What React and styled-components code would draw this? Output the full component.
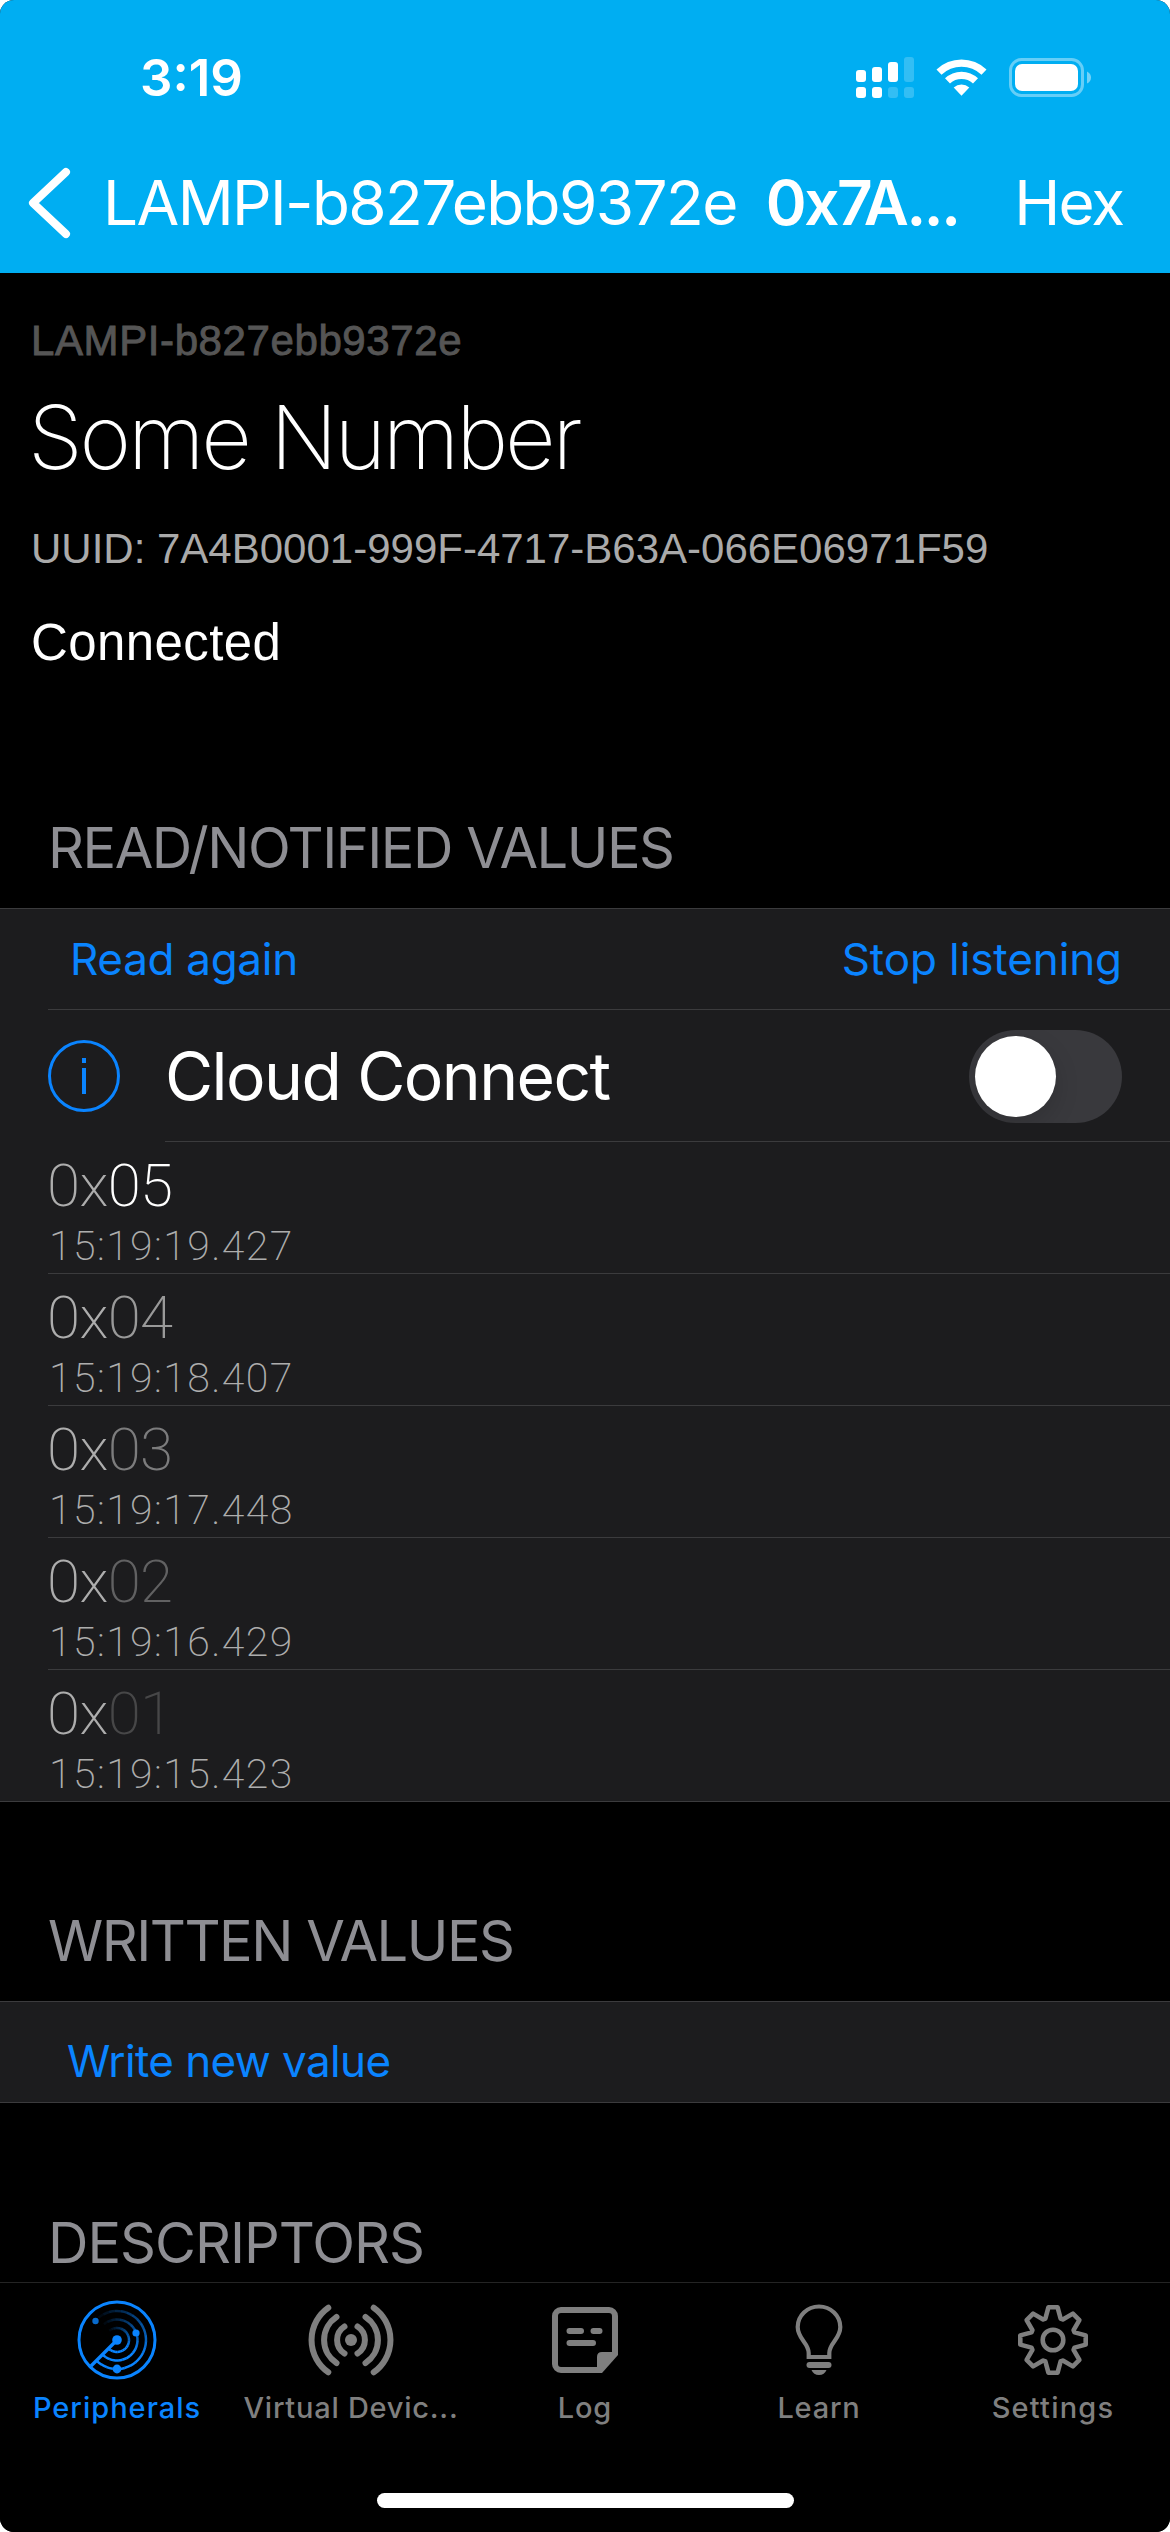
import React from 'react';
import styled, { createGlobalStyle } from 'styled-components';

const sans = `Inter, "Liberation Sans", sans-serif`;
const helv = `"Liberation Sans", Arial, sans-serif`;
const thin = `Roboto, Inter, sans-serif`;

const Global = createGlobalStyle`
  * { box-sizing: border-box; }
  html, body { margin: 0; padding: 0; background: #fff; }
`;

const Screen = styled.div`
  width: 1170px;
  height: 2532px;
  display: flex;
  flex-direction: column;
  background: #000;
  border-radius: 14px;
  overflow: hidden;
  font-family: ${sans};
  color: #fff;
`;

const Top = styled.header`
  height: 273px;
  flex: none;
  background: #00aef2;
  display: flex;
  flex-direction: column;
`;

const StatusBar = styled.div`
  height: 141px;
  padding: 17px 78px 0 140px;
  display: flex;
  align-items: flex-start;
  justify-content: space-between;
`;

const Label = styled.span`
  display: block;
  flex: none;
  white-space: nowrap;
  font-family: ${(p) => p.$font || sans};
  font-size: ${(p) => p.$size}px;
  line-height: ${(p) => p.$line || p.$size}px;
  font-weight: ${(p) => p.$weight || 400};
  letter-spacing: ${(p) => p.$track || 0}px;
  color: ${(p) => p.$color || '#fff'};
`;

const DeviceName = styled(Label)`
  -webkit-text-stroke: 0.9px #555;
`;

const StatusIcons = styled.svg`
  display: block;
  width: 236px;
  height: 50px;
  margin-top: 35px;
`;

const NavBar = styled.nav`
  display: flex;
  align-items: center;
  height: 123px;
  padding: 0 47px 0 25px;
`;

const Chevron = styled.svg`
  display: block;
  width: 50px;
  height: 80px;
  margin-right: 28px;
`;

const Spacer = styled.div`
  width: ${(p) => p.$w || 0}px;
  flex: ${(p) => (p.$w ? 'none' : 1)};
`;

const Summary = styled.section`
  height: 436px;
  flex: none;
  padding: 46px 31px 0;
`;

const SummaryLine = styled.div`
  height: ${(p) => p.$h}px;
  margin-left: ${(p) => p.$shift || 0}px;
`;

const SectionTitle = styled.h2`
  margin: 0;
  height: ${(p) => p.$h}px;
  flex: none;
  padding: 0 48px ${(p) => p.$pb}px;
  display: flex;
  align-items: flex-end;
  font-size: 56px;
  line-height: 56px;
  font-weight: 400;
  letter-spacing: ${(p) => p.$track}px;
  white-space: nowrap;
  color: #8e8e93;
`;

const Group = styled.section`
  flex: none;
  background: #1c1c1e;
  border-top: 1px solid #3b3b3d;
  border-bottom: 1px solid #3b3b3d;
`;

const Row = styled.div`
  height: ${(p) => p.$h}px;
  margin-left: ${(p) => p.$inset || 0}px;
  border-bottom: ${(p) => (p.$last ? 0 : 1)}px solid #3b3b3d;
  display: flex;
  align-items: center;
`;

const Action = styled.button`
  border: 0;
  background: none;
  padding: ${(p) => p.$pad};
  font: 400 44px/52px ${sans};
  letter-spacing: ${(p) => p.$track}px;
  color: #0a84ff;
  white-space: nowrap;
`;

const SwitchRow = styled.div`
  height: 132px;
  padding-left: 48px;
  display: flex;
  align-items: stretch;
`;

const Info = styled.svg`
  display: block;
  width: 72px;
  height: 72px;
  margin: 30px 45px 0 0;
  flex: none;
`;

const SwitchBody = styled.div`
  flex: 1;
  display: flex;
  align-items: center;
  justify-content: space-between;
  border-bottom: 1px solid #3b3b3d;
  padding: 1px 48px 0 0;
`;

const Track = styled.div`
  width: 153px;
  height: 93px;
  border-radius: 47px;
  background: #39393d;
  padding: 6px;
  overflow: hidden;
`;

const Knob = styled.div`
  width: 81px;
  height: 81px;
  border-radius: 50%;
  background: #fff;
  box-shadow: 0 9px 24px rgba(0, 0, 0, 0.15);
`;

const Reading = styled.div`
  height: ${(p) => (p.$last ? 131 : 132)}px;
  margin-left: 48px;
  padding-top: 14px;
  border-bottom: ${(p) => (p.$last ? 0 : 1)}px solid #3b3b3d;
`;

const Value = styled.div`
  display: flex;
  height: 60px;
  margin-left: -1px;
  font-family: ${thin};
  font-size: 60px;
  line-height: 60px;
  font-weight: 200;
  letter-spacing: -0.6px;
  color: #adadad;
`;

const Digits = styled.span`
  color: ${(p) => p.$color};
`;

const Time = styled.div`
  padding: 8px 0 0 1px;
  font-family: ${thin};
  font-size: 41px;
  line-height: 44px;
  font-weight: 200;
  letter-spacing: 1.4px;
  color: #adadad;
`;

const TabBar = styled.footer`
  flex: none;
  height: 250px;
  border-top: 1px solid #242424;
  background: #000;
  display: flex;
  flex-direction: column;
  align-items: center;
`;

const Tabs = styled.div`
  width: 1170px;
  height: 210px;
  display: grid;
  grid-template-columns: repeat(5, 1fr);
`;

const Tab = styled.button`
  border: 0;
  background: none;
  padding: 12px 0 0;
  display: flex;
  flex-direction: column;
  align-items: center;
  color: ${(p) => (p.$active ? '#0a84ff' : '#7f7f7f')};
`;

const TabIcon = styled.svg`
  display: block;
  width: 90px;
  height: 90px;
`;

const TabText = styled.span`
  margin-top: 5px;
  font: 500 29px/36px ${sans};
  letter-spacing: ${(p) => p.$track}px;
  white-space: nowrap;
`;

const HomeIndicator = styled.div`
  width: 417px;
  height: 15px;
  border-radius: 8px;
  background: #fff;
`;

function arc(r, a0, a1) {
  const p = (a) => `${(r * Math.cos((a * Math.PI) / 180)).toFixed(2)} ${(r * Math.sin((a * Math.PI) / 180)).toFixed(2)}`;
  return `M${p(a0)}A${r} ${r} 0 0 1 ${p(a1)}`;
}

function Radar() {
  const steps = 22;
  const parts = [];
  [12, 20.5, 29].forEach((r) => {
    for (let i = 0; i < steps; i += 1) {
      const end = 135 - i * 12;
      parts.push(<path key={`${r}-${i}`} d={arc(r, end - 12.5, end)} strokeOpacity={Math.min(1, 1.5 * (1 - i / steps))} />);
    }
  });
  return (
    <TabIcon viewBox="-45 -45 90 90" fill="none" stroke="currentColor" strokeWidth="2.5">
      <circle r="38" strokeWidth="3" />
      {parts}
      <path d="M0 0L-26 26" strokeWidth="3.4" />
      <g fill="currentColor" stroke="none">
        <circle r="4.8" />
        <circle cx="19" cy="-7" r="3.6" />
        <circle cx="0" cy="29" r="4.4" />
        <circle cx="-21.5" cy="-19" r="3.2" opacity=".8" />
      </g>
    </TabIcon>
  );
}

function Beacon() {
  return (
    <TabIcon viewBox="-45 -45 90 90" fill="none" stroke="currentColor" strokeWidth="6" strokeLinecap="round">
      <circle r="6" fill="currentColor" stroke="none" />
      {[1, -1].map((s) => (
        <g key={s} transform={`scale(${s} 1)`}>
          <path d="M6.5 -13.5A16 16 0 0 1 6.5 13.5" />
          <path d="M14.5 -23A27.5 27.5 0 0 1 14.5 23" />
          <path d="M22.7 -32.3A39.5 39.5 0 0 1 22.7 32.3" />
        </g>
      ))}
    </TabIcon>
  );
}

function Note() {
  return (
    <TabIcon viewBox="-45 -45 90 90" fill="none" stroke="currentColor" strokeWidth="6">
      <path d="M14 30H-24A6 6 0 0 1 -30 24V-24A6 6 0 0 1 -24 -30H24A6 6 0 0 1 30 -24V14" />
      <path d="M33 12V15L17 33H12V17Q12 12 17 12Z" fill="currentColor" stroke="none" />
      <path d="M-15.5 -9H-4M8.5 -9H14.5M-15.5 3H8" strokeLinecap="round" />
    </TabIcon>
  );
}

function Bulb() {
  return (
    <TabIcon viewBox="-45 -45 90 90" fill="none" stroke="currentColor" strokeWidth="4.2">
      <path d="M-10.3 17V13C-10.3 3-21.3 -1-21.3 -13A21.3 20.5 0 0 1 21.3 -13C21.3 -1 10.3 3 10.3 13V17Z" />
      <g fill="currentColor" stroke="none">
        <rect x="-12.5" y="22" width="25" height="6" rx="3" />
        <path d="M-7.5 30H7.5Q5.5 35 0 35T-7.5 30Z" />
      </g>
    </TabIcon>
  );
}

function Gear() {
  const pts = [];
  for (let i = 0; i < 8; i += 1) {
    const a = (i * Math.PI) / 4;
    [[-7.6, -21.5], [-4.6, -32.7], [4.6, -32.7], [7.6, -21.5]].forEach(([x, y]) => {
      pts.push(`${(x * Math.cos(a) - y * Math.sin(a)).toFixed(2)},${(x * Math.sin(a) + y * Math.cos(a)).toFixed(2)}`);
    });
  }
  return (
    <TabIcon viewBox="-45 -45 90 90" fill="none" stroke="currentColor" strokeWidth="4.6" strokeLinejoin="round">
      <polygon points={pts.join(' ')} />
      <circle r="10.3" />
    </TabIcon>
  );
}

const readings = [
  { value: '05', time: '15:19:19.427', color: '#fff' },
  { value: '04', time: '15:19:18.407', color: '#999' },
  { value: '03', time: '15:19:17.448', color: '#7c7c7d' },
  { value: '02', time: '15:19:16.429', color: '#616162' },
  { value: '01', time: '15:19:15.423', color: '#474748' },
];

const tabs = [
  { name: 'Peripherals', icon: Radar, active: true, track: 1 },
  { name: 'Virtual Devic...', icon: Beacon, track: 0.75 },
  { name: 'Log', icon: Note, track: 0.8 },
  { name: 'Learn', icon: Bulb, track: 0.8 },
  { name: 'Settings', icon: Gear, track: 1.2 },
];

export default function App() {
  return (
    <>
      <Global />
      <Screen>
        <Top>
          <StatusBar>
            <Label $size={51} $line={122} $weight={600} $track={0}>3:19</Label>
            <StatusIcons viewBox="856 52 236 50" fill="#fff">
              <rect x="856" y="70" width="10" height="12" rx="3" />
              <rect x="872" y="67" width="10" height="15" rx="3" />
              <rect x="888" y="62" width="10" height="20" rx="3" />
              <rect x="904" y="57" width="10" height="25" rx="3" opacity=".2" />
              <rect x="856" y="87" width="10" height="11" rx="3" />
              <rect x="872" y="87" width="10" height="11" rx="3" />
              <rect x="888" y="87" width="10" height="11" rx="3" opacity=".2" />
              <rect x="904" y="87" width="10" height="11" rx="3" opacity=".2" />
              <path d="M936.5 69.5A36 36 0 0 1 986.5 69.5L981.5 74.8A29 29 0 0 0 941.5 74.8Z" />
              <path d="M945 78.3A24 24 0 0 1 978 78.3L973 83.6A17 17 0 0 0 950 83.6Z" />
              <path d="M953.7 87.5A12 12 0 0 1 969.3 87.5L961.5 95.8Z" />
              <rect x="1010.5" y="59.5" width="72" height="36" rx="11" fill="none" stroke="#fff" strokeWidth="3" opacity=".4" />
              <rect x="1015" y="64" width="63" height="27" rx="7" />
              <path d="M1087 71.5Q1091 73.5 1091 77.5T1087 83.5Z" opacity=".45" />
            </StatusIcons>
          </StatusBar>
          <NavBar>
            <Chevron viewBox="0 0 50 80" fill="none" stroke="#fff" strokeWidth="8" strokeLinecap="round" strokeLinejoin="round">
              <path d="M41 9L8 40L41 71" />
            </Chevron>
            <Label $size={62} $line={76} $track={-1.6}>LAMPI-b827ebb9372e</Label>
            <Spacer $w={29} />
            <Label $size={62} $line={76} $weight={600} $track={-2.4}>0x7A...</Label>
            <Spacer />
            <Label $size={62} $line={76} $track={-2}>Hex</Label>
          </NavBar>
        </Top>

        <Summary>
          <SummaryLine $h={73}>
            <DeviceName $font={helv} $size={42} $line={44} $track={0.6} $color="#555">LAMPI-b827ebb9372e</DeviceName>
          </SummaryLine>
          <SummaryLine $h={136} $shift={-3}>
            <Label $size={88} $line={90} $weight={200} $track={-3.2}>Some Number</Label>
          </SummaryLine>
          <SummaryLine $h={87}>
            <Label $font={helv} $size={42} $line={42} $color="#aaa">UUID: 7A4B0001-999F-4717-B63A-066E06971F59</Label>
          </SummaryLine>
          <Label $font={helv} $size={51} $line={56} $track={0.4}>Connected</Label>
        </Summary>

        <SectionTitle $h={199} $pb={32} $track={-1.5}>READ/NOTIFIED VALUES</SectionTitle>
        <Group>
          <Row $h={101} $inset={48}>
            <Action $pad="0 0 0 22px" $track={-0.3}>Read again</Action>
            <Spacer />
            <Action $pad="0 48px 0 0" $track={-0.1}>Stop listening</Action>
          </Row>
          <SwitchRow>
            <Info viewBox="0 0 72 72" fill="none" stroke="#0a84ff" strokeWidth="3">
              <circle cx="36" cy="36" r="34.5" />
              <path d="M36 28V54M36 18V23" strokeWidth="4" />
            </Info>
            <SwitchBody>
              <Label $size={66} $line={80} $track={-1.6}>Cloud Connect</Label>
              <Track><Knob /></Track>
            </SwitchBody>
          </SwitchRow>
          {readings.map((r, i) => (
            <Reading key={r.value} $last={i === readings.length - 1}>
              <Value>0x<Digits $color={r.color}>{r.value}</Digits></Value>
              <Time>{r.time}</Time>
            </Reading>
          ))}
        </Group>

        <SectionTitle $h={199} $pb={32} $track={-1.5}>WRITTEN VALUES</SectionTitle>
        <Group>
          <Row $h={100} $last>
            <Action $pad="18px 0 0 67px" $track={-0.6}>Write new value</Action>
          </Row>
        </Group>
        <SectionTitle $h={179} $pb={11} $track={-1}>DESCRIPTORS</SectionTitle>

        <TabBar>
          <Tabs>
            {tabs.map(({ name, icon: Icon, active, track }) => (
              <Tab key={name} $active={active}>
                <Icon />
                <TabText $track={track}>{name}</TabText>
              </Tab>
            ))}
          </Tabs>
          <HomeIndicator />
        </TabBar>
      </Screen>
    </>
  );
}
